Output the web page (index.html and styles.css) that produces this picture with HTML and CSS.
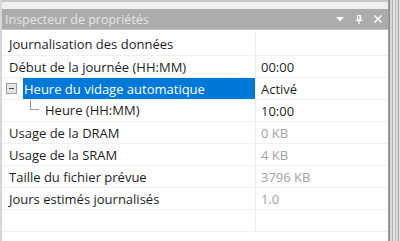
FILE: index.html
```html
<!DOCTYPE html>
<html lang="fr">
<head>
    <meta charset="UTF-8">
    <title>Inspecteur de propriétés</title>
    <link rel="stylesheet" href="styles.css">
</head>
<body>
    <div class="frame">
        <div class="panel">
            <div class="topstrip"></div>
            <div class="titlebar">
                <span class="title">Inspecteur de propriétés</span>
                <span class="tools">
                    <svg class="tool" width="10" height="10" viewBox="0 0 10 10"><path d="M1 3h8L5 7.5z" fill="#fff"/></svg>
                    <svg class="tool" width="10" height="10" viewBox="0 0 10 10"><path d="M3.5 1.5h3v4.5h-3zM1.5 6.5h7M5 6.5v3.5" fill="none" stroke="#fff" stroke-width="1.2"/><path d="M5.5 1.5h1v4.5h-1z" fill="#fff"/></svg>
                    <svg class="tool" width="10" height="10" viewBox="0 0 10 10"><path d="M1.5 1.5l7 7M8.5 1.5l-7 7" stroke="#fff" stroke-width="1.4"/></svg>
                </span>
            </div>
            <div class="grid">
                <div class="row first">
                    <div class="name">Journalisation des données</div>
                    <div class="value"></div>
                </div>
                <div class="row">
                    <div class="name">Début de la journée (HH:MM)</div>
                    <div class="value">00:00</div>
                </div>
                <div class="row">
                    <div class="name expander">
                        <span class="toggle"><span class="minus"></span></span>
                        <span class="selected">Heure du vidage automatique</span>
                    </div>
                    <div class="value">Activé</div>
                </div>
                <div class="row">
                    <div class="name child">
                        <span class="branch"></span>
                        Heure (HH:MM)
                    </div>
                    <div class="value">10:00</div>
                </div>
                <div class="row">
                    <div class="name">Usage de la DRAM</div>
                    <div class="value readonly">0 KB</div>
                </div>
                <div class="row">
                    <div class="name">Usage de la SRAM</div>
                    <div class="value readonly">4 KB</div>
                </div>
                <div class="row">
                    <div class="name">Taille du fichier prévue</div>
                    <div class="value readonly">3796 KB</div>
                </div>
                <div class="row">
                    <div class="name">Jours estimés journalisés</div>
                    <div class="value readonly">1.0</div>
                </div>
                <div class="row">
                    <div class="name"></div>
                    <div class="value"></div>
                </div>
            </div>
        </div>
        <div class="splitter"></div>
    </div>
</body>
</html>
```

FILE: styles.css
```css
* {
    box-sizing: border-box;
}
body {
    margin: 0;
    font-family: "Open Sans", "Noto Sans", sans-serif;
    font-size: 13px;
    color: #1e1e1e;
    background: #ffffff;
    overflow: hidden;
}
.frame {
    display: flex;
    width: 400px;
    height: 241px;
}
.panel {
    flex: 1;
    display: flex;
    flex-direction: column;
    border-left: 2px solid #d6d6d6;
    border-right: 1px solid #9a9a9a;
}
.topstrip {
    height: 9px;
    background: #efefef;
    border-top: 2px solid #c8c8c8;
}
.titlebar {
    height: 21px;
    background: #acacac;
    display: flex;
    align-items: center;
    justify-content: space-between;
    padding: 0 5px 0 3px;
    border-bottom: 1px solid #c2c2c2;
}
.title {
    color: #e4e4e4;
    font-size: 12.5px;
}
.tools {
    display: flex;
    align-items: center;
}
.tool {
    display: block;
    margin-left: 9px;
}
.grid {
    flex: 1;
    padding-top: 2px;
    background: #ffffff;
}
.row {
    display: flex;
    height: 22px;
    border-bottom: 1px solid #f0f0f0;
}
.row.first {
    height: 24px;
}
.name {
    width: 254px;
    padding-left: 7px;
    display: flex;
    align-items: center;
    border-right: 1px solid #ececec;
    white-space: nowrap;
}
.value {
    flex: 1;
    padding-left: 5px;
    display: flex;
    align-items: center;
}
.readonly {
    color: #a2a2a2;
}
.expander {
    padding-left: 4px;
}
.toggle {
    width: 11px;
    height: 11px;
    border: 1px solid #9c9c9c;
    background: #e6e6e6;
    display: flex;
    align-items: center;
    justify-content: center;
    margin-right: 6px;
}
.minus {
    width: 5px;
    height: 1px;
    background: #444;
}
.selected {
    flex: 1;
    align-self: stretch;
    display: flex;
    align-items: center;
    background: #0078d7;
    color: #ffffff;
    padding-left: 1px;
}
.child {
    padding-left: 28px;
    align-items: flex-start;
    line-height: 21px;
}
.branch {
    width: 9px;
    height: 10px;
    border-left: 1px solid #9c9c9c;
    border-bottom: 1px solid #9c9c9c;
    margin-right: 6px;
}
.splitter {
    width: 11px;
    background: linear-gradient(to right, #8e8e8e 0, #8e8e8e 1px, #d8d8d8 1px, #d8d8d8 3px, #b0b0b0 3px, #b0b0b0 4px, #e4e4e4 4px, #e4e4e4 6px, #bdbdbd 6px, #bdbdbd 7px, #dcdcdc 7px, #dcdcdc 9px, #a4a4a4 9px, #a4a4a4 10px, #e8e8e8 10px);
}
```
